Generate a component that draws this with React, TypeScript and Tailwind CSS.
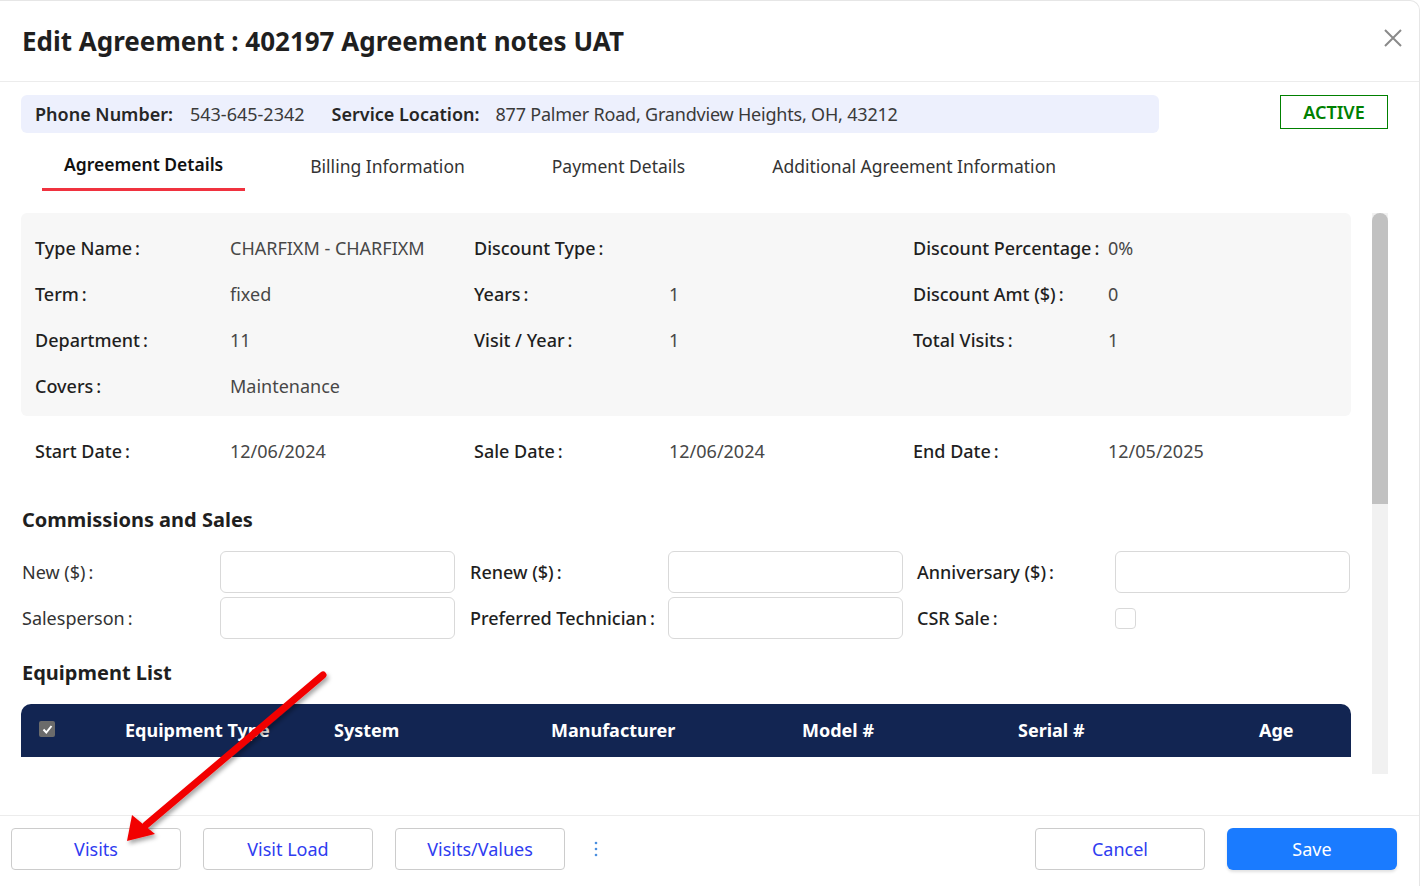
import React from 'react'

const details = [
  [
    ['Type Name', 'CHARFIXM - CHARFIXM'],
    ['Discount Type', ''],
    ['Discount Percentage', '0%'],
  ],
  [
    ['Term', 'fixed'],
    ['Years', '1'],
    ['Discount Amt ($)', '0'],
  ],
  [
    ['Department', '11'],
    ['Visit / Year', '1'],
    ['Total Visits', '1'],
  ],
  [
    ['Covers', 'Maintenance'],
    ['', ''],
    ['', ''],
  ],
]

const dates = [
  ['Start Date', '12/06/2024'],
  ['Sale Date', '12/06/2024'],
  ['End Date', '12/05/2025'],
]

function Field({ label, value }: { label: string; value: string }) {
  return (
    <div className="flex items-center">
      <span className="w-[195px] shrink-0 font-medium text-[#1f1f1f]">{label ? `${label}\u2009:` : ''}</span>
      <span className="text-[#474747]">{value}</span>
    </div>
  )
}

function Input() {
  return <div className="w-[235px] h-[42px] rounded-[6px] border border-[#d9d9d9] bg-white" />
}

export default function App() {
  return (
    <div className="relative w-[1422px] h-[886px] overflow-hidden bg-white font-['Noto_Sans',_sans-serif] text-[18px] text-[#262626]">
      <div className="flex h-full w-[1420px] flex-col rounded-tr-[10px] border-r border-t border-[#e6e6e6]">
        {/* Header */}
        <div className="flex h-[81px] shrink-0 items-center justify-between border-b border-[#ececec] pl-[22px] pr-[17px]">
          <h1 className="text-[26px] font-bold text-[#1f1f1f]">
            Edit Agreement : 402197 Agreement notes UAT
          </h1>
          <svg width="18" height="18" viewBox="0 0 18 18" className="mb-[7px]">
            <path d="M1 1 L17 17 M17 1 L1 17" stroke="#8a8a8a" strokeWidth="2" />
          </svg>
        </div>

        {/* Body */}
        <div className="flex flex-col px-[21px] pt-[13px]">
          <div className="flex items-start justify-between">
            <div className="flex h-[38px] w-[1138px] items-center rounded-[6px] bg-[#edf0fd] pl-[14px]">
              <span className="font-semibold">Phone Number:</span>
              <span className="ml-[17px] text-[#3a3a3a]">543-645-2342</span>
              <span className="ml-[27px] font-semibold">Service Location:</span>
              <span className="ml-[16px] tracking-[-0.2px] text-[#3a3a3a]">877 Palmer Road, Grandview Heights, OH, 43212</span>
            </div>
            <div className="mr-[10px] flex h-[34px] w-[108px] items-center justify-center border border-[#008000] font-semibold text-[#008000]">
              ACTIVE
            </div>
          </div>

          {/* Tabs */}
          <div className="mt-[8px] ml-[21px] flex gap-[43px] text-[17.5px]">
            <div className="flex h-[50px] items-center border-b-[3px] border-[#f0323f] px-[22px] font-semibold text-[#111]">
              Agreement Details
            </div>
            <div className="flex h-[50px] items-center px-[22px] text-[#333]">Billing Information</div>
            <div className="flex h-[50px] items-center px-[22px] text-[#333]">Payment Details</div>
            <div className="flex h-[50px] items-center px-[22px] text-[#333]">Additional Agreement Information</div>
          </div>

          {/* Scroll area */}
          <div className="mt-[22px] flex h-[561px]">
            <div className="w-[1330px] shrink-0 overflow-hidden">
              <div className="rounded-[6px] bg-[#f7f7f7] pl-[14px] pt-[12px] pb-[7px]">
                {details.map((row, i) => (
                  <div key={i} className="grid h-[46px] grid-cols-[439px_439px_439px] items-center">
                    {row.map(([l, v], j) => (
                      <Field key={j} label={l} value={v} />
                    ))}
                  </div>
                ))}
              </div>
              <div className="mt-[12px] grid h-[46px] grid-cols-[439px_439px_439px] items-center pl-[14px]">
                {dates.map(([l, v]) => (
                  <Field key={l} label={l} value={v} />
                ))}
              </div>

              <h2 className="mt-[32px] h-[28px] pl-[1px] text-[20px] leading-[28px] font-bold text-[#1f1f1f]">
                Commissions and Sales
              </h2>
              <div className="mt-[17px] flex flex-col gap-[4px] pl-[1px]">
                <div className="grid grid-cols-[448px_447px_435px]">
                  <div className="flex items-center">
                    <span className="w-[198px] text-[#333]">New ($)&#8201;:</span>
                    <Input />
                  </div>
                  <div className="flex items-center">
                    <span className="w-[198px] font-medium text-[#1f1f1f]">Renew ($)&#8201;:</span>
                    <Input />
                  </div>
                  <div className="flex items-center">
                    <span className="w-[198px] font-medium text-[#1f1f1f]">Anniversary ($)&#8201;:</span>
                    <Input />
                  </div>
                </div>
                <div className="grid grid-cols-[448px_447px_435px]">
                  <div className="flex items-center">
                    <span className="w-[198px] text-[#333]">Salesperson&#8201;:</span>
                    <Input />
                  </div>
                  <div className="flex items-center">
                    <span className="w-[198px] font-medium text-[#1f1f1f]">Preferred Technician&#8201;:</span>
                    <Input />
                  </div>
                  <div className="flex items-center">
                    <span className="w-[198px] font-medium text-[#1f1f1f]">CSR Sale&#8201;:</span>
                    <div className="h-[21px] w-[21px] rounded-[4px] border border-[#d9d9d9] bg-white" />
                  </div>
                </div>
              </div>

              <h2 className="mt-[20px] h-[28px] pl-[1px] text-[20px] leading-[28px] font-bold text-[#1f1f1f]">
                Equipment List
              </h2>
              <div className="mt-[17px] flex h-[53px] items-center rounded-t-[10px] bg-[#122552] font-bold text-white">
                <div className="mb-[3px] ml-[18px] flex h-[16px] w-[16px] items-center justify-center rounded-[2px] bg-[#6b6b6b]">
                  <svg width="11" height="11" viewBox="0 0 11 11">
                    <path d="M1.5 5.5 L4.3 8.5 L9.5 2" fill="none" stroke="white" strokeWidth="2" />
                  </svg>
                </div>
                <span className="ml-[70px] w-[209px]">Equipment Type</span>
                <span className="w-[217px]">System</span>
                <span className="w-[251px]">Manufacturer</span>
                <span className="w-[216px]">Model #</span>
                <span className="w-[241px]">Serial #</span>
                <span>Age</span>
              </div>
            </div>
            <div className="ml-[21px] w-[16px] bg-[#f1f1f1]">
              <div className="h-[291px] w-full rounded-t-[8px] bg-[#c1c1c1]" />
            </div>
          </div>
        </div>

        {/* Footer */}
        <div className="mt-auto flex h-[71px] items-start border-t border-[#ececec] pl-[11px] pr-[22px] pt-[12px]">
          <div className="flex items-center gap-[22px]">
            {['Visits', 'Visit Load', 'Visits/Values'].map((b) => (
              <button key={b} className="h-[42px] w-[170px] rounded-[4px] border border-[#cccccc] bg-white text-[#2f3cf0]">
                {b}
              </button>
            ))}
            <svg width="4" height="16" viewBox="0 0 4 16" className="ml-[7px]">
              <circle cx="2" cy="2" r="1.3" fill="#4a8fe0" />
              <circle cx="2" cy="8" r="1.3" fill="#4a8fe0" />
              <circle cx="2" cy="14" r="1.3" fill="#4a8fe0" />
            </svg>
          </div>
          <div className="ml-auto flex gap-[22px]">
            <button className="h-[42px] w-[170px] rounded-[4px] border border-[#cccccc] bg-white text-[#2f3cf0]">
              Cancel
            </button>
            <button className="h-[42px] w-[170px] rounded-[6px] bg-[#1a7bff] text-white shadow-[0_2px_3px_rgba(0,0,0,0.12)]">
              Save
            </button>
          </div>
        </div>
      </div>

      {/* Annotation arrow */}
      <svg className="pointer-events-none absolute left-0 top-0" width="1422" height="886">
        <defs>
          <filter id="sh" x="-20%" y="-20%" width="140%" height="140%">
            <feDropShadow dx="2" dy="3" stdDeviation="2" floodColor="#000" floodOpacity="0.35" />
          </filter>
        </defs>
        <g filter="url(#sh)">
          <line x1="323" y1="675" x2="146" y2="825" stroke="#f20000" strokeWidth="7" strokeLinecap="round" />
          <path d="M127 841 L132 815 L155 834 Z" fill="#f20000" />
        </g>
      </svg>
    </div>
  )
}
